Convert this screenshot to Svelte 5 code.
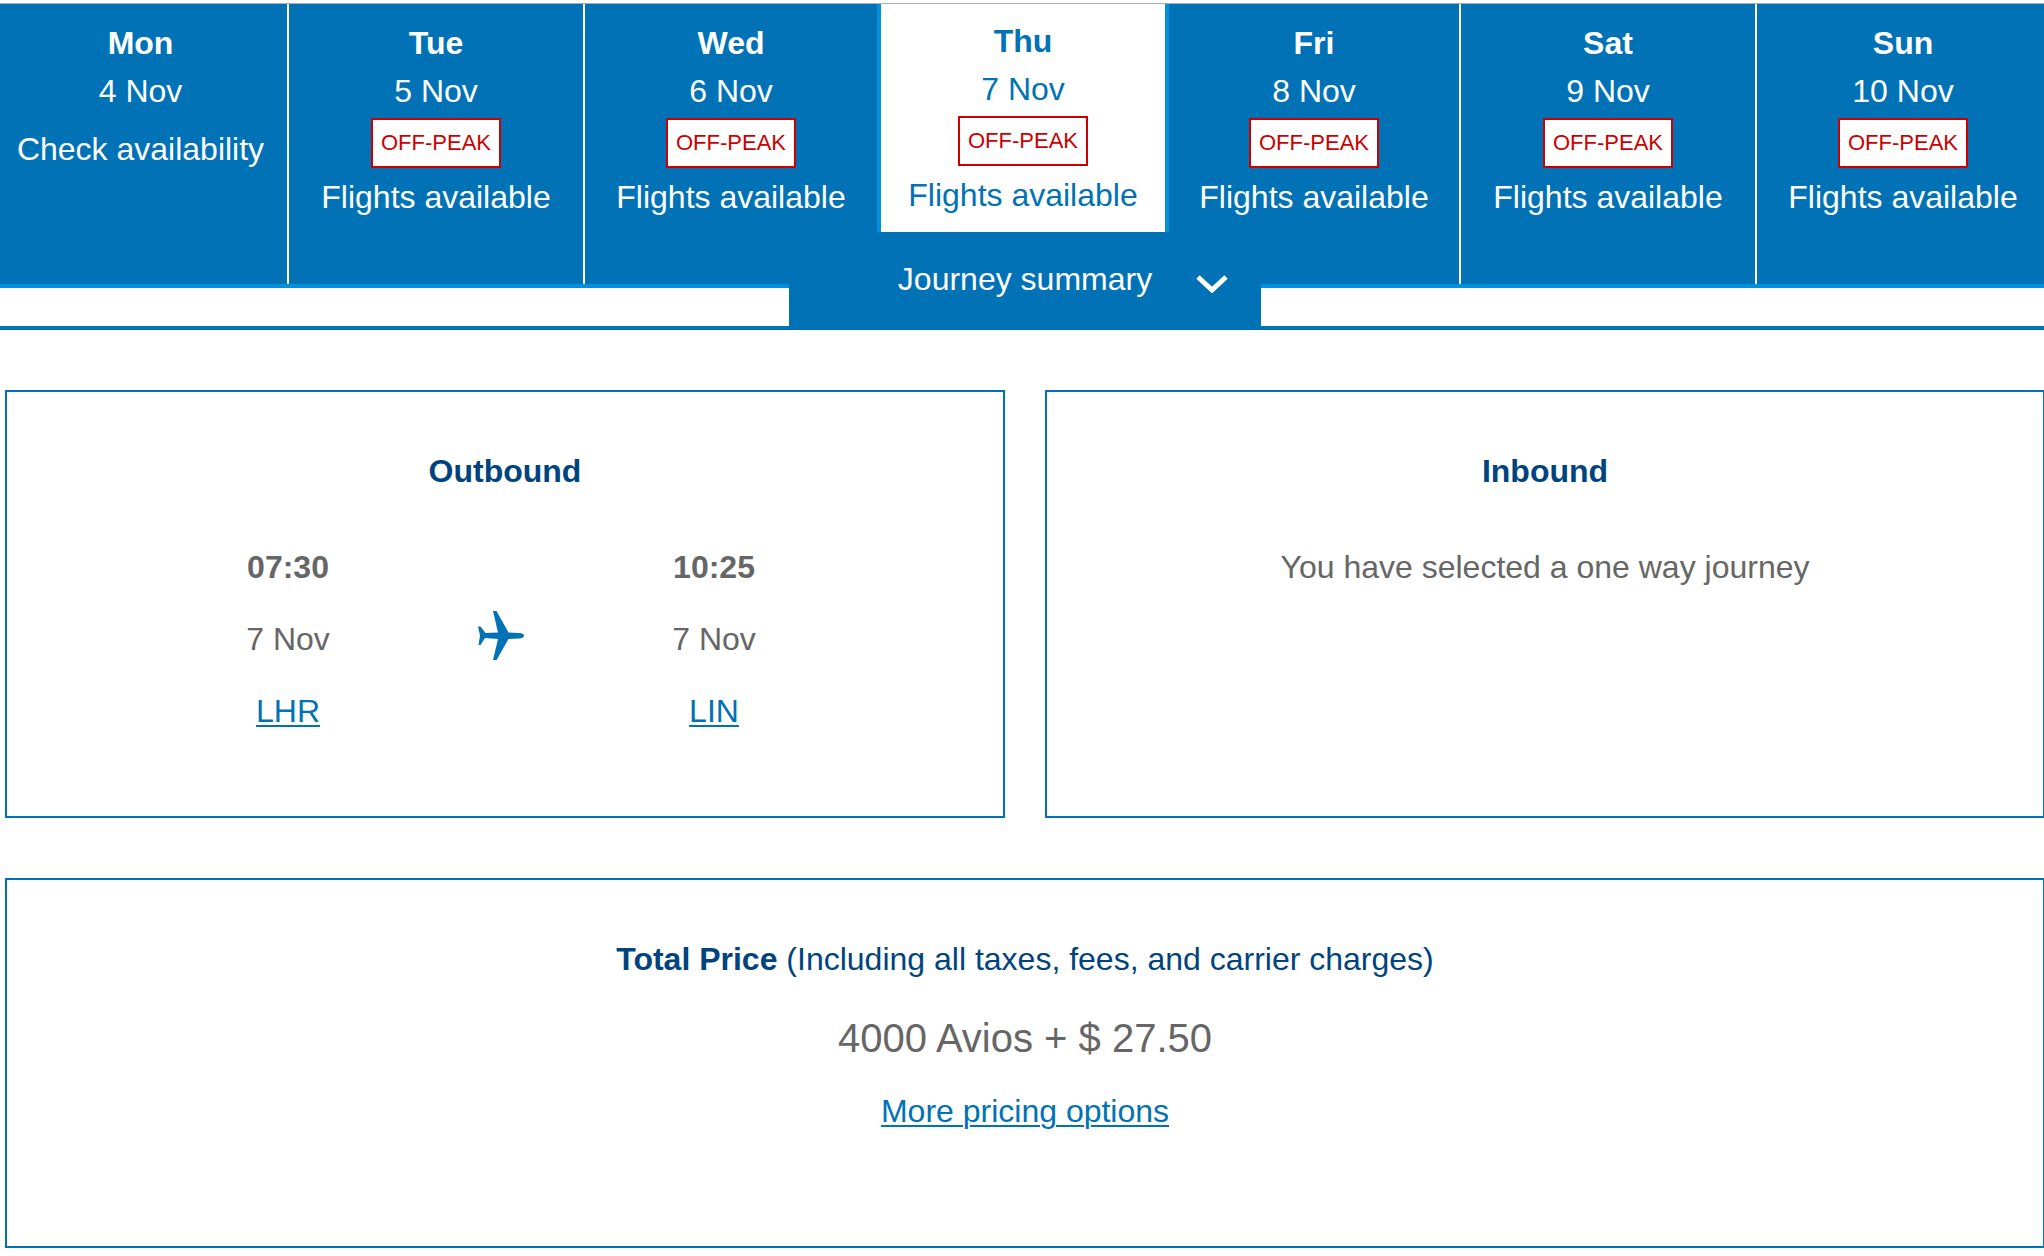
<script>
let selected = $state(3)
let expanded = $state(true)

const days = [
    { name: 'Mon', date: '4 Nov', offPeak: false },
    { name: 'Tue', date: '5 Nov', offPeak: true },
    { name: 'Wed', date: '6 Nov', offPeak: true },
    { name: 'Thu', date: '7 Nov', offPeak: true },
    { name: 'Fri', date: '8 Nov', offPeak: true },
    { name: 'Sat', date: '9 Nov', offPeak: true },
    { name: 'Sun', date: '10 Nov', offPeak: true }
]

const outbound = {
    from: { time: '07:30', date: '7 Nov', airport: 'LHR' },
    to: { time: '10:25', date: '7 Nov', airport: 'LIN' }
}
</script>

<svelte:head>
    <title>Journey summary</title>
</svelte:head>

{#snippet stop(point)}
    <div class="stop">
        <strong>{point.time}</strong>
        <span>{point.date}</span>
        <a href="#{point.airport}">{point.airport}</a>
    </div>
{/snippet}

<div class="page">
    <nav class="days">
        {#each days as day, i}
            <button type="button" class="day" class:selected={i === selected}
                class:before={i === selected - 1}
                aria-pressed={i === selected}
                onclick={() => selected = i}>
                <strong>{day.name}</strong>
                <span>{day.date}</span>
                {#if day.offPeak}
                    <span class="badge">OFF-PEAK</span>
                    <span>Flights available</span>
                {:else}
                    <span class="check">Check availability</span>
                {/if}
            </button>
        {/each}
    </nav>

    <div class="summary-bar">
        <button type="button" class="toggle" aria-expanded={expanded} onclick={() => expanded = !expanded}>
            <span class="toggle-label">Journey summary</span>
            <svg class="chevron" viewBox="0 0 32 18" width="32" height="18" aria-hidden="true">
                <path d="M2 2 L16 15 L30 2" fill="none" stroke="#fff" stroke-width="5" />
            </svg>
        </button>
    </div>

    {#if expanded}
        <main class="panels">
            <section class="panel">
                <h2>Outbound</h2>
                <div class="route">
                    {@render stop(outbound.from)}
                    <svg class="plane" viewBox="0 0 46 49" width="46" height="49" aria-hidden="true">
                        <path d="M15 0 H18.500 L30.500 21.500 L41 22 Q46 22.500 46 24.500 Q46 27 41 27.500 L30.500 28 L18.500 49 H15 L20 28 L7 27 L2.500 34 H0.500 L2 24.500 L0 15.500 H2.500 L7.500 22 L20 21.500 Z" />
                    </svg>
                    {@render stop(outbound.to)}
                </div>
            </section>

            <section class="panel">
                <h2>Inbound</h2>
                <p class="message">You have selected a one way journey</p>
            </section>

            <section class="panel total">
                <h2>Total Price <span>(Including all taxes, fees, and carrier charges)</span></h2>
                <p class="price">4000 Avios + $ 27.50</p>
                <a href="#pricing">More pricing options</a>
            </section>
        </main>
    {/if}
</div>

<style>
:global(body) {
    background: #fff;
}
.page {
    padding-top: 3px;
    overflow-x: hidden;
    color: #666;
    font: 32px/48px "Liberation Sans", Arial, sans-serif;
}
button {
    margin: 0;
    border: 0;
    border-radius: 0;
    font: inherit;
    cursor: pointer;
}
a {
    color: #0072b5;
    text-decoration: underline;
    text-decoration-thickness: 2px;
    text-underline-offset: 3px;
}

/* day tabs */
.days {
    display: grid;
    grid-template-columns: 295fr 296fr 292fr 292fr 292fr 296fr 292fr;
    margin: 0 -5px 0 -6px;
    border-top: 1px solid #b0b0b0;
    border-bottom: 4px solid #0090dc;
}
.day {
    display: flex;
    flex-direction: column;
    align-items: center;
    padding: 15px 0 63px;
    border-right: 2px solid #fff;
    background: #0072b5;
    color: #fff;
    white-space: nowrap;
}
.day.before,
.day:last-child {
    border-right: 0;
}
.day.selected {
    padding-top: 13px;
    border: solid #0090dc;
    border-width: 0 4px;
    background: #fff;
    color: #0072b5;
}
.badge {
    margin: 3px 0 5px;
    padding: 0 8px;
    border: 2px solid #c00;
    background: #fff;
    color: #c00;
    font-size: 22px;
    line-height: 46px;
}
.check {
    margin-top: 10px;
}

/* summary toggle, hangs over the bottom of the day tabs */
.summary-bar {
    display: flex;
    justify-content: center;
    border-bottom: 4px solid #0072b5;
}
.toggle {
    position: relative;
    display: grid;
    grid-template-columns: 1fr auto 1fr;
    align-items: center;
    width: 472px;
    margin: -56px 0 0 6px;
    padding: 23px 0;
    background: #0072b5;
    color: #fff;
}
.toggle-label {
    grid-column: 2;
}
.chevron {
    margin: 10px 0 0 44px;
}

/* panels */
.panels {
    display: grid;
    grid-template-columns: 1fr 1fr;
    gap: 60px 40px;
    margin: 60px -1px 8px 5px;
}
.panel {
    padding: 55px 0 81px;
    border: 2px solid #0072b5;
    text-align: center;
}
h2 {
    margin: 0;
    color: #00447f;
    font-size: 32px;
    line-height: 48px;
}
h2 span {
    font-weight: normal;
}
.route {
    display: grid;
    grid-template-columns: repeat(3, 213px);
    justify-content: center;
    align-items: center;
    justify-items: center;
    margin-top: 48px;
    padding-right: 8px;
}
.stop {
    display: flex;
    flex-direction: column;
    align-items: center;
    gap: 24px;
}
.plane {
    margin-bottom: 8px;
    fill: #0072b5;
}
.message {
    margin: 48px 0 0;
}
.total {
    grid-column: 1 / -1;
    padding-bottom: 111px;
}
.price {
    margin: 31px 0 25px;
    font-size: 40px;
}
</style>
